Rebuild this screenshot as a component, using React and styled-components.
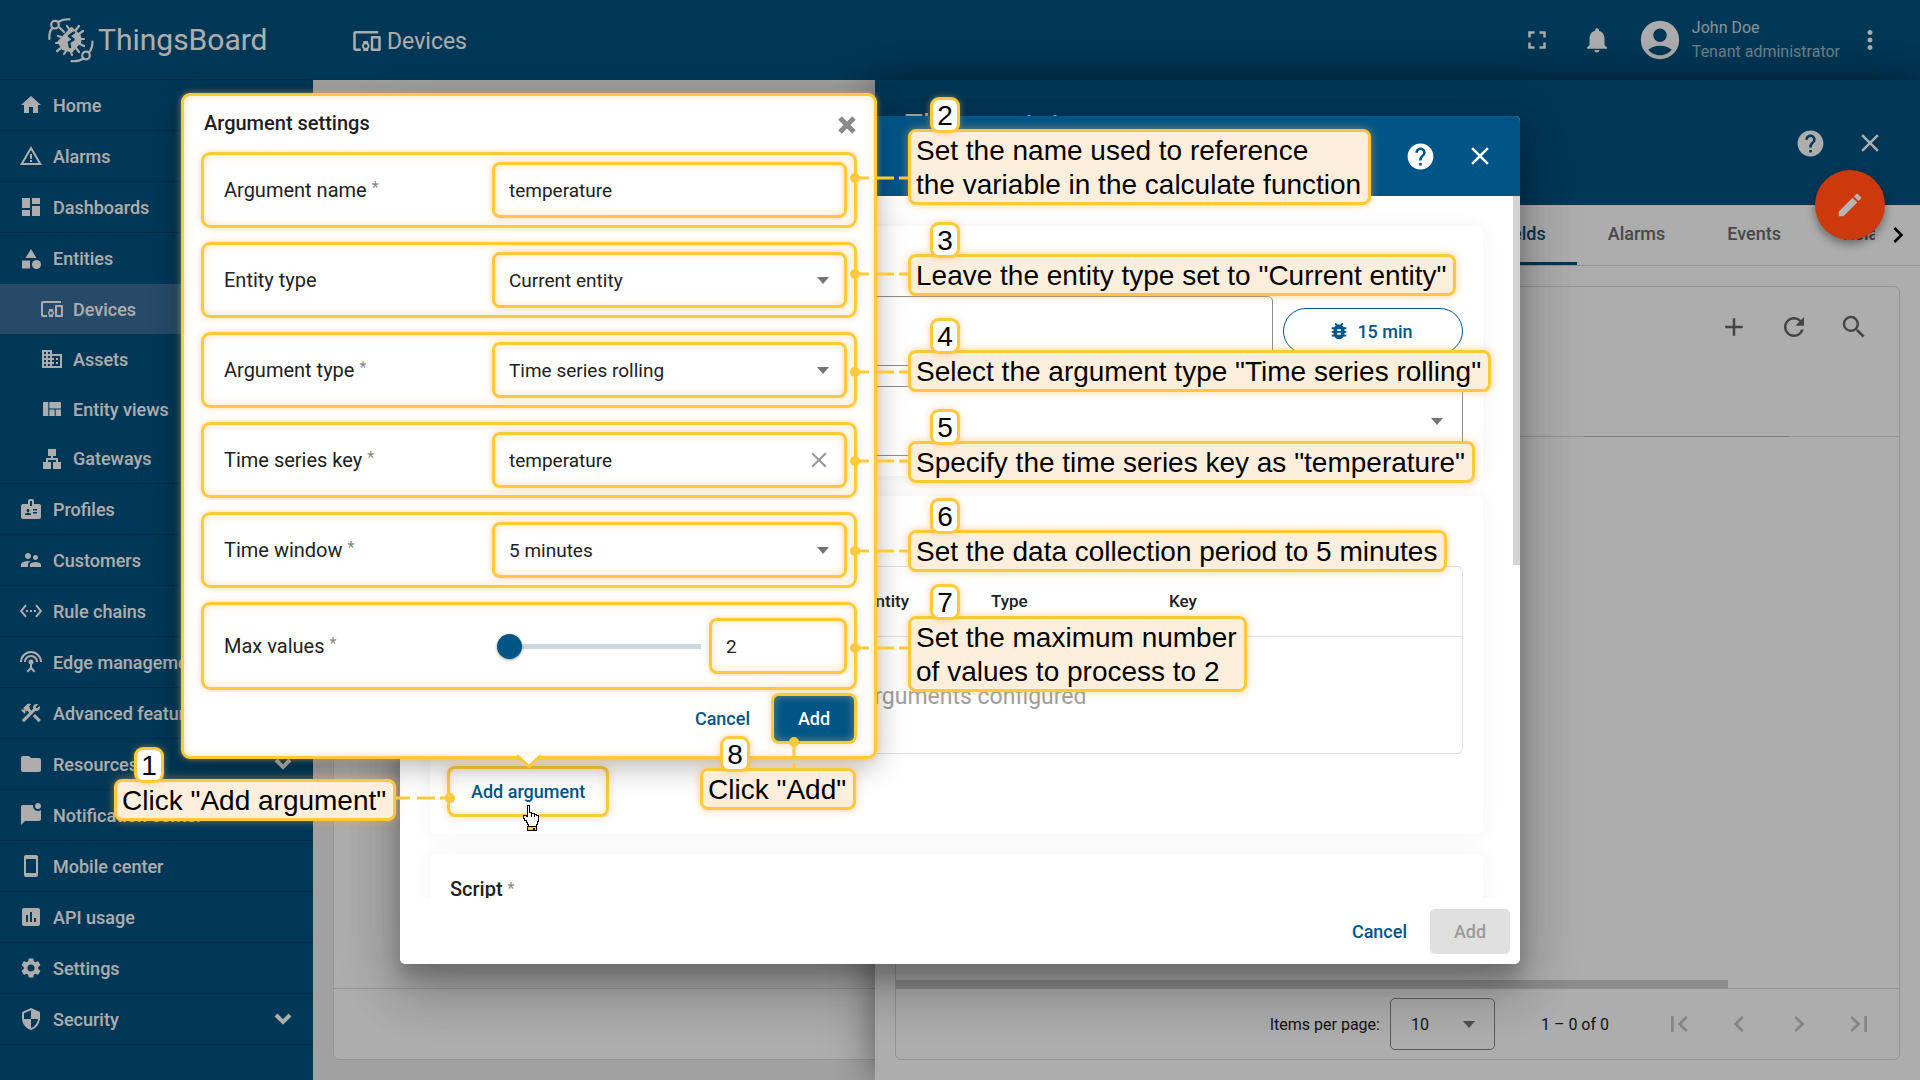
import React from "react";
import styled, { createGlobalStyle, css } from "styled-components";
import {
  MdHome, MdWarningAmber, MdDashboard, MdCategory, MdDevicesOther, MdDomain,
  MdViewQuilt, MdBadge, MdSupervisorAccount, MdSettingsEthernet,
  MdSettingsInputAntenna, MdConstruction, MdFolder, MdInsertChart, MdSettings,
  MdSecurity, MdFullscreen, MdNotifications, MdAccountCircle, MdMoreVert,
  MdHelp, MdClose, MdEdit, MdAdd, MdRefresh, MdSearch, MdFirstPage,
  MdChevronLeft, MdChevronRight, MdLastPage,
} from "react-icons/md";

const c = {
  primary: "#005587",
  nav: "#005280",
  yellow: "#ffc93c",
  cream: "#feefdd",
  ink: "#212121",
};

const Global = createGlobalStyle`
  *, *::before, *::after { box-sizing: border-box; }
  body { margin: 0; overflow: hidden; font-family: Roboto, "Liberation Sans", sans-serif; color: ${c.ink}; }
  button, input, select { font-family: inherit; margin: 0; }
  button { border: 0; background: none; padding: 0; color: inherit; display: inline-flex; align-items: center; justify-content: center; }
  select { appearance: none; }
  svg { display: block; flex: none; }
`;

/* ---------- page shell ---------- */

const Page = styled.div`
  position: relative;
  height: 100vh;
  display: grid;
  grid-template: 80px minmax(0, 1fr) / 313px minmax(0, 1fr);
  overflow: hidden;
`;

const Brand = styled.a`
  display: flex;
  align-items: center;
  padding-left: 40px;
  background: ${c.nav};
  border-bottom: 1px solid #004269;
  color: #fff;
  font-size: 30px;
  text-decoration: none;
`;

const TopBar = styled.header`
  display: flex;
  align-items: center;
  padding: 0 35px 0 39px;
  background: ${c.nav};
  color: #fff;
`;

const Crumb = styled.h1`
  display: flex;
  align-items: center;
  gap: 5px;
  margin: 0 auto 0 0;
  padding-top: 2px;
  font-size: 23px;
  font-weight: 400;
`;

const IconButton = styled.button`
  width: ${(p) => p.$w || 60}px;
  height: 60px;
  color: ${(p) => p.$color || "inherit"};
`;

const User = styled.div`
  display: flex;
  align-items: center;
  gap: 9px;
  margin: 0 15px 0 10px;
  font-size: 16px;
  line-height: 24px;
  color: rgba(255, 255, 255, 0.8);
  svg { color: #fff; }
  small { display: block; font-size: 16px; color: rgba(255, 255, 255, 0.65); }
`;

const SideNav = styled.nav`
  background: ${c.nav};
  overflow: hidden;
`;

const NavLink = styled.a`
  display: flex;
  align-items: center;
  gap: ${(p) => (p.$sub ? 9 : 10)}px;
  height: ${(p) => (p.$sub ? 50 : 51)}px;
  padding: 0 21px 0 ${(p) => (p.$sub ? 40 : 19)}px;
  background: ${(p) => (p.$active ? "#386e99" : "transparent")};
  border-bottom: ${(p) => (p.$line ? "1px solid #004269" : "0")};
  color: #fff;
  font-size: 18px;
  font-weight: 500;
  text-decoration: none;
  white-space: nowrap;
  span { flex: 1; }
`;

const Main = styled.main`
  position: relative;
  display: flex;
  padding: 20px;
  background: #eee;
`;

const ListCard = styled.section`
  flex: 1;
  display: flex;
  flex-direction: column;
  background: #fff;
  border: 1px solid #ddd;
  border-radius: 6px;
`;

const ListBody = styled.div`
  flex: 1;
`;

const ListFooter = styled.div`
  height: 71px;
  border-top: 1px solid #ddd;
`;

/* ---------- details drawer ---------- */

const Drawer = styled.aside`
  position: absolute;
  inset: 0 0 0 auto;
  width: 1045px;
  display: flex;
  flex-direction: column;
  background: #fff;
  box-shadow: 0 0 40px rgba(0, 0, 0, 0.5);
`;

const DrawerHead = styled.header`
  display: flex;
  align-items: flex-start;
  height: 125px;
  padding: 25px 20px 0 30px;
  background: ${c.nav};
  color: #fff;
  h2 { margin: 0 auto 0 0; font-size: 30px; font-weight: 400; line-height: 40px; }
  button { margin-top: 8px; }
`;

const TabBar = styled.div`
  display: flex;
  height: 61px;
  border-bottom: 1px solid #d8d8d8;
`;

const Tabs = styled.div`
  flex: 1;
  display: flex;
  justify-content: flex-end;
  overflow: hidden;
`;

const Tab = styled.button`
  flex: none;
  padding: 0 31px;
  padding-bottom: 4px;
  font-size: 18px;
  font-weight: 500;
  color: #6b6b6b;
  white-space: nowrap;
  ${(p) => p.$active && css`color: ${c.nav}; box-shadow: inset 0 -3px ${c.nav};`}
  ${(p) => p.$cut && css`width: 63px; padding-right: 0; justify-content: flex-start; overflow: hidden;`}
`;

const TabNext = styled.button`
  width: 45px;
  color: #000;
`;

const DrawerCard = styled.section`
  flex: 1;
  display: flex;
  flex-direction: column;
  margin: 20px;
  border: 1px solid #d6d6d6;
  border-radius: 6px;
`;

const Toolbar = styled.div`
  display: flex;
  align-items: center;
  justify-content: flex-end;
  height: 80px;
  padding-right: 15px;
  color: #666;
`;

const HeadLine = styled.div`
  display: flex;
  align-items: flex-end;
  justify-content: flex-end;
  height: 70px;
  padding-right: 110px;
  border-bottom: 1px solid #d6d6d6;
  &::after { content: ""; width: 205px; height: 1px; margin-bottom: -1px; background: #bdbdbd; }
`;

const Blank = styled.div`
  flex: 1;
`;

const HScroll = styled.div`
  width: 832px;
  height: 8px;
  background: #cfcfcf;
`;

const Paginator = styled.div`
  display: flex;
  align-items: center;
  justify-content: flex-end;
  height: 71px;
  padding-right: 10px;
  border-top: 1px solid #d6d6d6;
  font-size: 16px;
  color: #1b1b1b;
`;

const PageSize = styled.span`
  display: flex;
  align-items: center;
  width: 105px;
  height: 52px;
  margin: 0 46px 0 10px;
  padding: 0 19px 0 20px;
  border: 1px solid #888;
  border-radius: 5px;
  color: #777;
  select { flex: 1; min-width: 0; border: 0; background: none; padding: 0; font-size: 16px; color: #1b1b1b; }
`;

const PageNav = styled.div`
  display: flex;
  margin-left: 40px;
`;

const Backdrop = styled.div`
  position: absolute;
  inset: 0;
  background: rgba(0, 0, 0, 0.32);
`;

const Fab = styled.button`
  position: absolute;
  top: 170px;
  right: 35px;
  width: 70px;
  height: 70px;
  border-radius: 50%;
  background: #cb390d;
  color: #b5b5b5;
  box-shadow: 0 4px 10px rgba(0, 0, 0, 0.4);
`;

/* ---------- dialog ---------- */

const Stage = styled.div`
  position: absolute;
  inset: 0;
  display: grid;
  place-items: center;
`;

const DialogFrame = styled.div`
  position: relative;
`;

const Dialog = styled.section`
  display: flex;
  flex-direction: column;
  width: 1120px;
  height: 848px;
  background: #fff;
  border-radius: 5px;
  overflow: hidden;
  box-shadow: 0 14px 20px rgba(0, 0, 0, 0.2), 0 30px 50px 4px rgba(0, 0, 0, 0.14), 0 10px 60px 10px rgba(0, 0, 0, 0.14);
`;

const DialogHead = styled.header`
  display: flex;
  justify-content: flex-end;
  align-items: center;
  height: 80px;
  padding-right: 10px;
  background: ${c.primary};
  color: #fff;
`;

const DialogBody = styled.div`
  display: flex;
  flex: 1;
  min-height: 0;
  overflow: hidden;
`;

const Cards = styled.div`
  flex: 1;
  display: flex;
  flex-direction: column;
  gap: 20px;
  padding: 30px;
`;

const VScroll = styled.div`
  width: 7px;
  height: 369px;
  background: #d4d4d4;
`;

const Card = styled.section`
  display: flex;
  flex-direction: column;
  padding: 20px;
  border-radius: 6px;
  background: #fff;
  box-shadow: 0 0 20px rgba(0, 0, 0, 0.06);
`;

const CardTitle = styled.h3`
  height: 30px;
  margin: 0 0 20px;
  font-size: 20px;
  font-weight: 500;
  line-height: 30px;
  sup { font-size: 16px; font-weight: 400; line-height: 0; vertical-align: 2px; color: #888; }
`;

const FormRow = styled.div`
  display: flex;
  align-items: center;
  gap: 10px;
  height: 70px;
  & + & { margin-top: 20px; }
`;

const Outlined = styled.div`
  flex: 1;
  display: flex;
  align-items: center;
  height: 70px;
  padding-right: 19px;
  border: 1px solid #8c8c8c;
  border-radius: 5px;
  color: #757575;
  input, select { flex: 1; height: 60px; border: 0; padding: 0 20px; background: none; font-size: 18px; }
`;

const Pill = styled.button`
  gap: 7px;
  width: 180px;
  height: 46px;
  padding-right: 5px;
  border: 1px solid ${c.primary};
  border-radius: 23px;
  color: ${c.primary};
  font-size: 18px;
  font-weight: 500;
`;

const TableBox = styled.div`
  height: 188px;
  margin-bottom: 15px;
  border: 1px solid #e0e0e0;
  border-radius: 6px;
`;

const ArgTable = styled.table`
  width: 100%;
  table-layout: fixed;
  border-collapse: collapse;
  th { height: 69px; padding: 0; border-bottom: 1px solid #e0e0e0; font-size: 17px; font-weight: 500; text-align: left; }
  th:first-child { width: 415px; padding-left: 20px; }
  th:nth-child(2) { width: 125px; }
  th:nth-child(3) { width: 178px; }
  td { height: 118px; padding: 2px 0 0; text-align: center; font-size: 23px; color: #9e9e9e; }
`;

const ring = css`
  box-shadow: 0 0 0 3px ${c.yellow}, 0 0 8px 3px rgba(255, 190, 110, 0.6), inset 0 0 8px rgba(255, 190, 110, 0.45);
`;

const Button = styled.button`
  height: 45px;
  padding: 0 21px;
  border-radius: 5px;
  font-size: 18px;
  font-weight: 500;
  color: ${c.primary};
  ${(p) => p.$solid && css`width: 80px; background: ${c.primary}; color: #fff;`}
  ${(p) => p.$off && css`width: 80px; background: #e0e0e0; color: #9b9b9b;`}
  ${(p) => p.$marked && ring}
`;

const AddRow = styled.div`
  display: flex;
  padding: 0;
`;

const DialogFoot = styled.footer`
  display: flex;
  align-items: center;
  justify-content: flex-end;
  gap: 2px;
  height: 66px;
  padding-right: 10px;
`;

/* ---------- argument popover ---------- */

const Popover = styled.form`
  position: absolute;
  left: -219px;
  top: -23px;
  width: 696px;
  height: 666px;
  padding: 15px 17px 0;
  border: 3px solid ${c.yellow};
  border-radius: 9px;
  background: #fff;
  box-shadow: 0 0 6px rgba(255, 180, 90, 0.6), 0 8px 30px rgba(0, 0, 0, 0.28), inset 0 0 8px rgba(255, 190, 110, 0.45);
`;

const PopHead = styled.header`
  display: flex;
  align-items: center;
  justify-content: space-between;
  height: 24px;
  margin-bottom: 17px;
  padding: 0 1px 0 3px;
  font-size: 20px;
  h2 { margin: 0; font-size: 20px; font-weight: 500; }
  button { padding-top: 4px; color: #8a8a8a; }
`;

const Rows = styled.div`
  display: flex;
  flex-direction: column;
  gap: 14px;
`;

const SettingRow = styled.div`
  display: flex;
  align-items: center;
  height: ${(p) => (p.$tall ? 88 : 76)}px;
  padding: 0 7px 0 20px;
  border: 3px solid ${c.yellow};
  border-radius: 9px;
  box-shadow: 0 0 6px rgba(255, 190, 110, 0.6), inset 0 0 8px rgba(255, 190, 110, 0.45);
  label { flex: none; width: 268px; font-size: 20px; }
  sup { margin-left: 5px; font-size: 16px; line-height: 0; vertical-align: 4px; color: #888; }
`;

const Field = styled.div`
  flex: 1;
  min-width: 0;
  display: flex;
  align-items: center;
  height: 56px;
  padding: 0 ${(p) => (p.$clearable ? 12 : 15)}px 0 14px;
  border: 3px solid ${c.yellow};
  border-radius: 8px;
  background: #fff;
  color: #757575;
  box-shadow: 0 0 6px rgba(255, 190, 110, 0.6), inset 0 0 8px rgba(255, 190, 110, 0.45);
  input, select { flex: 1; min-width: 0; height: 40px; border: 0; padding: 0; background: none; outline: 0; font-size: 19px; color: ${c.ink}; }
`;

const Slider = styled.input`
  appearance: none;
  flex: none;
  width: 204px;
  height: 25px;
  && { margin: 0 8px 0 5px; }
  background: linear-gradient(#cbd7e1, #cbd7e1) center / 100% 5px no-repeat;
  border-radius: 3px;
  &::-webkit-slider-thumb {
    appearance: none;
    width: 25px;
    height: 25px;
    border-radius: 50%;
    background: ${c.primary};
    box-shadow: 0 1px 3px rgba(0, 0, 0, 0.4);
  }
`;

const PopFoot = styled.footer`
  display: flex;
  justify-content: flex-end;
  gap: 3px;
  padding: 6px 3px 0 0;
`;

const PopTip = styled.svg`
  position: absolute;
  left: 330px;
  top: 658px;
`;

const Hand = styled.svg`
  position: absolute;
  left: 122px;
  top: 688px;
`;

/* ---------- numbered callouts ---------- */

const Note = styled.div`
  position: absolute;
  left: ${(p) => p.$x}px;
  top: ${(p) => p.$y}px;
  padding: 2px 7px 0 5px;
  border: 3px solid ${c.yellow};
  border-radius: 8px;
  background: ${c.cream};
  box-shadow: 0 0 8px rgba(255, 170, 70, 0.55);
  font-family: "Liberation Sans", Arial, sans-serif;
  font-size: 28px;
  line-height: 34px;
  color: #000;
  white-space: nowrap;
`;

const Badge = styled.b`
  position: absolute;
  left: ${(p) => (p.$side === "left" ? 19 : 17)}px;
  top: -35px;
  width: 30px;
  height: 36px;
  border: 3px solid ${c.yellow};
  border-radius: 9px;
  background: #fff;
  box-shadow: 0 0 6px rgba(255, 170, 70, 0.5);
  font-weight: 400;
  line-height: 31px;
  text-align: center;
`;

const Wire = styled.svg`
  position: absolute;
  ${(p) => p.$side === "left" && css`right: 100%; top: ${p.$at}px; margin-right: 3px;`}
  ${(p) => p.$side === "right" && css`left: 100%; top: ${p.$at}px; margin-left: 3px;`}
  ${(p) => p.$side === "top" && css`left: ${p.$at}px; bottom: 100%; margin-bottom: 3px;`}
`;

const wires = {
  left: [58, 10, "M5 5H58", 5, 5],
  right: [60, 10, "M0 5H54", 54, 5],
  top: [10, 31, "M5 5V31", 5, 5],
};

function Callout({ n, x, y, side = "left", at, children }) {
  const [w, h, d, cx, cy] = wires[side];
  return (
    <Note $x={x} $y={y}>
      {children}
      <Badge $side={side}>{n}</Badge>
      <Wire $side={side} $at={at} width={w} height={h}>
        <path d={d} stroke={c.yellow} strokeWidth="3" strokeDasharray="14 7 18 5" />
        <circle cx={cx} cy={cy} r="5" fill={c.yellow} />
      </Wire>
    </Note>
  );
}

/* ---------- drawings ---------- */

const glyph = (d) => ({ size = 22 }) => (
  <svg width={size} height={size} viewBox="0 0 24 24" fill="currentColor"><path d={d} /></svg>
);
const Lan = glyph("M13 22h8v-7h-3v-4h-5V9h3V2H8v7h3v2H6v4H3v7h8v-7H8v-2h8v2h-3z");
const Chat = glyph("M22 7v9c0 1.100-.9 2-2 2H6l-4 4V4c0-1.100.9-2 2-2h10.100C14 2.300 14 2.700 14 3c0 2.800 2.200 5 5 5 1.100 0 2.200-.4 3-1M16 3c0 1.700 1.300 3 3 3s3-1.300 3-3-1.300-3-3-3-3 1.300-3 3z");
const Phone = glyph("M17 19H7V5h10m0-4H7c-1.110 0-2 .89-2 2v18a2 2 0 0 0 2 2h10a2 2 0 0 0 2-2V3c0-1.110-.9-2-2-2z");
const Bug = glyph("M20 8h-2.810c-.45-.78-1.070-1.450-1.820-1.960L17 4.410 15.590 3l-2.170 2.170C12.960 5.060 12.490 5 12 5s-.96.06-1.410.17L8.410 3 7 4.410l1.620 1.630C7.880 6.550 7.260 7.220 6.810 8H4v2h2.090c-.05.33-.09.66-.09 1v1H4v2h2v1c0 .34.04.67.09 1H4v2h2.810c1.040 1.790 2.970 3 5.190 3s4.150-1.210 5.190-3H20v-2h-2.090c.05-.33.09-.66.09-1v-1h2v-2h-2v-1c0-.34-.04-.67-.09-1H20V8zm-6 8h-4v-2h4v2zm0-4h-4v-2h4v2z");

const Down = () => (
  <svg width="18" height="12" viewBox="0 0 18 12" fill="none" stroke="currentColor" strokeWidth="4"><path d="M2 2l7 7 7-7" /></svg>
);
const Caret = () => (
  <svg width="12" height="7" viewBox="0 0 12 7" fill="currentColor"><path d="M0 0h12L6 7z" /></svg>
);

const Logo = () => (
  <svg width="58" height="60" viewBox="0 0 58 60" fill="none" stroke="#fff" strokeWidth="2.200" strokeLinecap="round">
    <path d="M9.500 29C9 25 9.500 21 12.500 18M18 12c3-2 7-3 11.500-2.700M52.500 31.500c0 4-1 8-3.500 11M43.500 48.500c-3 2-7 3-12 2.700" />
    <circle cx="15" cy="14.700" r="3.800" />
    <circle cx="46" cy="45.500" r="3.800" />
    <path d="M24 22l-4-4M29 19l-2-3M36 20l3-4M21 27l-3-1M19 33h-3M21 38l-4 3M26 41l-2 3M31 42l1 3M36 38l3 4M40 34l4 2M41 29h3M39 24l4-3" />
    <path d="M31.500 18.500l8 7.500.5 5.500-8.500 9.500-8.500-2.500-4-6.500z" fill="#fff" strokeWidth="3" strokeLinejoin="round" />
    <path d="M34 22.500l-5 3.500 4.500 3.500-4.500 3 1 4.500" stroke={c.nav} strokeWidth="2.600" strokeLinejoin="round" />
  </svg>
);

const NAV = [
  ["Home", MdHome], ["Alarms", MdWarningAmber], ["Dashboards", MdDashboard],
  ["Entities", MdCategory, "open"],
  ["Devices", MdDevicesOther, "sub"], ["Assets", MdDomain, "sub"],
  ["Entity views", MdViewQuilt, "sub"], ["Gateways", Lan, "sub"],
  ["Profiles", MdBadge], ["Customers", MdSupervisorAccount],
  ["Rule chains", MdSettingsEthernet], ["Edge management", MdSettingsInputAntenna],
  ["Advanced features", MdConstruction], ["Resources", MdFolder, "more"],
  ["Notification center", Chat], ["Mobile center", Phone],
  ["API usage", MdInsertChart], ["Settings", MdSettings], ["Security", MdSecurity, "more"],
];

function Setting({ id, label, required, tall, children }) {
  return (
    <SettingRow $tall={tall}>
      <label htmlFor={id}>{label}{required && <sup>*</sup>}</label>
      {children}
    </SettingRow>
  );
}

function Choice({ id, value }) {
  return (
    <Field>
      <select id={id} defaultValue={value}><option>{value}</option></select>
      <Caret />
    </Field>
  );
}

export default function App() {
  return (
    <Page>
      <Global />
      <Brand href="#"><Logo />ThingsBoard</Brand>
      <TopBar>
        <Crumb><MdDevicesOther size={30} />Devices</Crumb>
        <IconButton aria-label="Fullscreen"><MdFullscreen size={30} /></IconButton>
        <IconButton aria-label="Notifications"><MdNotifications size={30} /></IconButton>
        <User>
          <MdAccountCircle size={46} />
          <div>John Doe<small>Tenant administrator</small></div>
        </User>
        <IconButton $w={30} aria-label="More"><MdMoreVert size={30} /></IconButton>
      </TopBar>

      <SideNav>
        {NAV.map(([label, Icon, kind]) => (
          <NavLink
            key={label}
            href="#"
            $sub={kind === "sub"}
            $active={label === "Devices"}
            $line={(kind !== "sub" && kind !== "open") || label === "Gateways"}
          >
            <Icon size={24} />
            <span>{label}</span>
            {kind === "more" && <Down />}
          </NavLink>
        ))}
      </SideNav>

      <Main>
        <ListCard><ListBody /><ListFooter /></ListCard>
        <Drawer>
          <DrawerHead>
            <h2>Thermostat</h2>
            <IconButton aria-label="Help"><MdHelp size={31} /></IconButton>
            <IconButton aria-label="Close details"><MdClose size={30} /></IconButton>
          </DrawerHead>
          <TabBar>
            <Tabs>
              <Tab $active>Calculated fields</Tab>
              <Tab>Alarms</Tab>
              <Tab>Events</Tab>
              <Tab $cut>Relations</Tab>
            </Tabs>
            <TabNext aria-label="Next tabs"><MdChevronRight size={32} /></TabNext>
          </TabBar>
          <DrawerCard>
            <Toolbar>
              <IconButton aria-label="Add field"><MdAdd size={30} /></IconButton>
              <IconButton aria-label="Refresh"><MdRefresh size={30} /></IconButton>
              <IconButton aria-label="Search"><MdSearch size={30} /></IconButton>
            </Toolbar>
            <HeadLine />
            <Blank />
            <HScroll />
            <Paginator>
              <label htmlFor="size">Items per page:</label>
              <PageSize>
                <select id="size" defaultValue="10"><option>10</option></select>
                <Caret />
              </PageSize>
              1 – 0 of 0
              <PageNav>
                <IconButton $color="#c4c4c4" aria-label="First page"><MdFirstPage size={32} /></IconButton>
                <IconButton $color="#c4c4c4" aria-label="Previous page"><MdChevronLeft size={32} /></IconButton>
                <IconButton $color="#c4c4c4" aria-label="Next page"><MdChevronRight size={32} /></IconButton>
                <IconButton $color="#c4c4c4" aria-label="Last page"><MdLastPage size={32} /></IconButton>
              </PageNav>
            </Paginator>
          </DrawerCard>
        </Drawer>
      </Main>

      <Backdrop />
      <Fab aria-label="Edit"><MdEdit size={30} /></Fab>

      <Stage>
        <DialogFrame>
          <Dialog>
            <DialogHead>
              <IconButton aria-label="Dialog help"><MdHelp size={31} /></IconButton>
              <IconButton aria-label="Close dialog"><MdClose size={30} /></IconButton>
            </DialogHead>
            <DialogBody>
              <Cards>
                <Card>
                  <CardTitle />
                  <FormRow>
                    <Outlined><input aria-label="Title" /></Outlined>
                    <Pill><Bug size={22} />15 min</Pill>
                  </FormRow>
                  <FormRow>
                    <Outlined><select aria-label="Type" /><Caret /></Outlined>
                  </FormRow>
                </Card>
                <Card>
                  <CardTitle />
                  <TableBox>
                    <ArgTable>
                      <thead>
                        <tr><th /><th>Entity</th><th>Type</th><th>Key</th></tr>
                      </thead>
                      <tbody>
                        <tr><td colSpan={4}>No arguments configured</td></tr>
                      </tbody>
                    </ArgTable>
                  </TableBox>
                  <AddRow><Button $marked>Add argument</Button></AddRow>
                </Card>
                <Card>
                  <CardTitle>Script <sup>*</sup></CardTitle>
                  <FormRow />
                </Card>
              </Cards>
              <VScroll />
            </DialogBody>
            <DialogFoot>
              <Button>Cancel</Button>
              <Button $off disabled>Add</Button>
            </DialogFoot>
          </Dialog>

          <Popover onSubmit={(e) => e.preventDefault()}>
            <PopHead>
              <h2>Argument settings</h2>
              <button type="button" aria-label="Close settings">
                <svg width="18" height="18" viewBox="0 0 18 18" stroke="currentColor" strokeWidth="5"><path d="M2 2l14 14M16 2L2 16" /></svg>
              </button>
            </PopHead>
            <Rows>
              <Setting id="name" label="Argument name" required>
                <Field><input id="name" defaultValue="temperature" /></Field>
              </Setting>
              <Setting id="entity" label="Entity type"><Choice id="entity" value="Current entity" /></Setting>
              <Setting id="kind" label="Argument type" required><Choice id="kind" value="Time series rolling" /></Setting>
              <Setting id="key" label="Time series key" required>
                <Field $clearable><input id="key" defaultValue="temperature" /><MdClose size={26} color="#9a9a9a" /></Field>
              </Setting>
              <Setting id="window" label="Time window" required><Choice id="window" value="5 minutes" /></Setting>
              <Setting id="max" label="Max values" required tall>
                <Slider type="range" aria-label="Max values slider" min="2" max="1000" defaultValue="2" />
                <Field><input id="max" defaultValue="2" /></Field>
              </Setting>
            </Rows>
            <PopFoot>
              <Button type="button">Cancel</Button>
              <Button $solid $marked>Add</Button>
            </PopFoot>
            <PopTip width="30" height="15" viewBox="0 0 30 15">
              <path d="M4 0h22L15 11z" fill="#fff" />
              <path d="M3 1.500l12 11 12-11" fill="none" stroke={c.yellow} strokeWidth="3" />
            </PopTip>
          </Popover>

          <Callout n="1" x={-286} y={663} side="right" at={11}>Click "Add argument"</Callout>
          <Callout n="2" x={508} y={13} at={41}>Set the name used to reference<br />the variable in the calculate function</Callout>
          <Callout n="3" x={508} y={138} at={12}>Leave the entity type set to "Current entity"</Callout>
          <Callout n="4" x={508} y={234} at={14}>Select the argument type "Time series rolling"</Callout>
          <Callout n="5" x={508} y={325} at={12}>Specify the time series key as "temperature"</Callout>
          <Callout n="6" x={508} y={414} at={13}>Set the data collection period to 5 minutes</Callout>
          <Callout n="7" x={508} y={500} at={24}>Set the maximum number<br />of values to process to 2</Callout>
          <Callout n="8" x={300} y={652} side="top" at={86}>Click "Add"</Callout>

          <Hand width="17" height="28" viewBox="0 0 17 28" shapeRendering="crispEdges">
            <path d="M5 1h2v7h2v1h3v1h2v1h2v6h-1v3h-1v2H6v-2H5v-2H4v-2H2v-2H1v-3h3v1h1z" fill="#fff" stroke="#000" />
            <path d="M9 9v4M12 10v3" stroke="#000" />
            <path d="M5.500 22.500h9v4h-9z" fill={c.yellow} stroke="#000" />
            <path d="M11 24h2v2h-2z" fill="#000" />
          </Hand>
        </DialogFrame>
      </Stage>
    </Page>
  );
}
